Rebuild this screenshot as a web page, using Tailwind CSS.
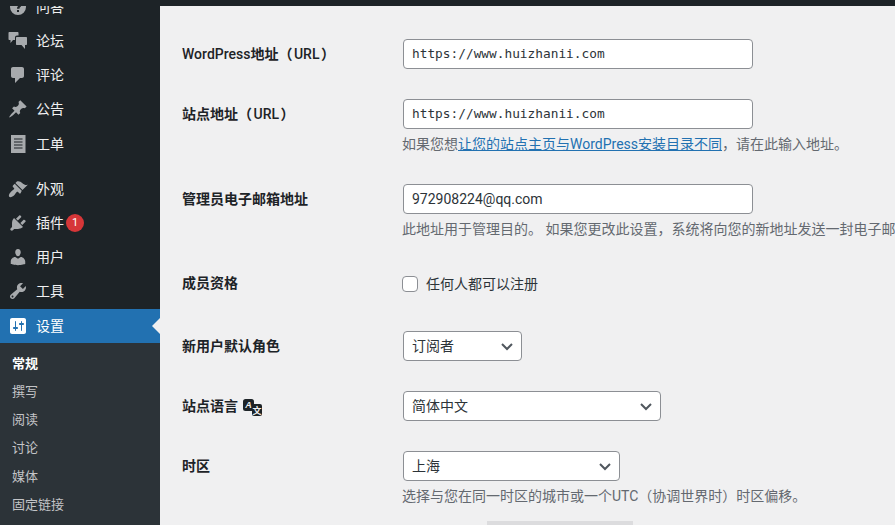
<!DOCTYPE html>
<html lang="zh-CN">
<head>
    <meta charset="UTF-8">
    <meta name="viewport" content="width=device-width, initial-scale=1.0">
    <title>常规选项</title>
    <script src="https://cdn.jsdelivr.net/npm/@tailwindcss/browser@4"></script>
</head>
<body class="h-[525px] overflow-hidden bg-[#f0f0f1] font-['Roboto','Noto_Sans_CJK_SC',sans-serif] text-sm">
<div class="h-[6px] bg-[#1d2327]"></div>
<div class="flex h-[519px] overflow-hidden">

    <!-- Sidebar -->
    <aside class="relative w-[160px] shrink-0 overflow-hidden bg-[#1d2327] text-[#f0f0f1]">
        <ul class="-mt-[16px]">
            <li class="flex h-[34px] items-center">
                <svg class="ml-[8px] h-5 w-5 fill-[#a7aaad]" viewBox="0 0 20 20"><path d="M10 2a8 8 0 1 0 0 16 8 8 0 0 0 0-16zm1 13H9v-2h2v2zm1.600-5.200c-.7.6-1.100 1-1.100 2H9c0-1.800.8-2.500 1.500-3.100.5-.4.9-.7.9-1.200 0-.6-.6-1-1.300-1-.8 0-1.400.5-1.500 1.300l-2-.3C6.900 5.800 8.200 4.800 10.100 4.800c2 0 3.300 1.100 3.300 2.800 0 1-.3 1.600-.8 2.200z"/></svg>
                <span class="ml-[8px]">问答</span>
            </li>
            <li class="flex h-[34px] items-center">
                <svg class="ml-[8px] h-5 w-5 fill-[#a7aaad]" viewBox="0 0 20 20"><path d="M1.500 1h8c.6 0 1 .4 1 1v2.500H9c-1.100 0-2 .9-2 2V9H5l-2.500 3V9h-1c-.6 0-1-.4-1-1V2c0-.6.4-1 1-1zM9 6h9c.6 0 1 .4 1 1v6c0 .6-.4 1-1 1h-1v4l-3.500-4H9c-.6 0-1-.4-1-1V7c0-.6.4-1 1-1z"/></svg>
                <span class="ml-[8px]">论坛</span>
            </li>
            <li class="flex h-[34px] items-center">
                <svg class="ml-[8px] h-5 w-5 fill-[#a7aaad]" viewBox="0 0 20 20"><path d="M5 2h9c1.100 0 2 .9 2 2v7c0 1.100-.9 2-2 2h-2l-5 5v-5H5c-1.100 0-2-.9-2-2V4c0-1.100.9-2 2-2z"/></svg>
                <span class="ml-[8px]">评论</span>
            </li>
            <li class="flex h-[34px] items-center">
                <svg class="ml-[8px] h-5 w-5 fill-[#a7aaad]" viewBox="0 0 20 20"><path d="M10.440 3.020l1.820-1.820 6.360 6.350-1.830 1.820c-1.050-.68-2.480-.57-3.410.36l-.75.75c-.92.93-1.040 2.350-.35 3.410l-1.830 1.820-2.410-2.410-2.800 2.790c-.42.42-3.380 2.710-3.800 2.290s1.860-3.390 2.280-3.810l2.790-2.790L4.100 9.360l1.830-1.820c1.050.69 2.480.57 3.400-.36l.75-.75c.93-.92 1.050-2.350.36-3.410z"/></svg>
                <span class="ml-[8px]">公告</span>
            </li>
            <li class="flex h-[34px] items-center pt-[1px]">
                <svg class="ml-[8px] h-5 w-5 fill-[#a7aaad]" viewBox="0 0 20 20"><path fill-rule="evenodd" d="M3 1h14.500v18H3zM6 4.500v1h8.500v-1zM6 7.500v1h8.500v-1zM6 10.500v1h8.500v-1zM6 13.500v1h8.500v-1z"/></svg>
                <span class="ml-[8px]">工单</span>
            </li>
            <li class="mt-[12px] flex h-[34px] items-center">
                <svg class="ml-[8px] h-5 w-5 fill-[#a7aaad]" viewBox="0 0 20 20"><path d="M14.480 11.060L7.410 3.990l1.500-1.500c.5-.56 2.300-.47 3.510.32 1.210.8 1.430 1.280 2.910 2.100 1.180.64 2.450 1.260 4.450.85zm-.71.71L6.700 4.700 4.930 6.470c-.39.39-.39 1.020 0 1.410l1.060 1.060c.39.39.39 1.030 0 1.420-.6.6-1.430 1.110-2.210 1.690-.35.26-.7.53-1.010.84-1.060 1.060-1.960 2.600-1.900 3.900.03.8.6 1.400 1.400 1.400 1.300.06 2.900-.9 3.900-1.900.31-.31.58-.66.84-1.010.58-.78 1.090-1.610 1.690-2.210.39-.39 1.030-.39 1.420 0l1.060 1.060c.39.39 1.020.39 1.410 0z"/></svg>
                <span class="ml-[8px]">外观</span>
            </li>
            <li class="flex h-[34px] items-center">
                <svg class="ml-[8px] h-5 w-5 fill-[#a7aaad]" viewBox="0 0 20 20"><path d="M13.110 4.360L9.870 7.600 8 5.730l3.240-3.240c.35-.34 1.050-.2 1.560.32.52.51.66 1.210.31 1.550zm-8 1.770l.91-1.120 9.010 9.010-1.190.84c-.71.71-2.630 1.160-3.820 1.160H6.140L4.900 17.260c-.59.59-1.540.59-2.120 0-.59-.58-.59-1.530 0-2.120l1.240-1.240v-3.880c0-1.130.4-3.190 1.090-3.890zm7.260 3.970l3.240-3.240c.34-.35 1.040-.21 1.550.31.52.51.66 1.210.31 1.550l-3.240 3.250z"/></svg>
                <span class="ml-[8px]">插件</span>
                <span class="ml-[2px] flex h-[18px] w-[18px] items-center justify-center rounded-full bg-[#d63638] text-[11px] text-white">1</span>
            </li>
            <li class="flex h-[34px] items-center">
                <svg class="ml-[8px] h-5 w-5 fill-[#a7aaad]" viewBox="0 0 20 20"><path d="M10 9.250c-2.270 0-2.730-3.440-2.730-3.440C7 4.020 7.820 2 9.970 2c2.160 0 2.980 2.020 2.710 3.810 0 0-.41 3.440-2.680 3.440zm0 2.570L12.720 10c2.390 0 4.520 2.330 4.520 4.530v2.490s-3.650 1.130-7.240 1.130c-3.650 0-7.240-1.130-7.240-1.130v-2.490c0-2.250 1.940-4.480 4.470-4.480z"/></svg>
                <span class="ml-[8px]">用户</span>
            </li>
            <li class="flex h-[34px] items-center">
                <svg class="ml-[8px] h-5 w-5 fill-[#a7aaad]" viewBox="0 0 20 20"><path d="M16.680 9.770c-1.340 1.340-3.300 1.670-4.950.99l-5.410 6.520c-.99.99-2.590.99-3.580 0s-.99-2.590 0-3.570l6.520-5.420c-.68-1.650-.35-3.610.99-4.950 1.280-1.280 3.120-1.620 4.720-1.060l-2.890 2.890 2.820 2.820 2.860-2.870c.53 1.580.18 3.390-1.080 4.650zM3.810 16.210c.4.39 1.040.39 1.430 0 .4-.4.4-1.040 0-1.430-.39-.4-1.030-.4-1.430 0-.39.39-.39 1.030 0 1.430z"/></svg>
                <span class="ml-[8px]">工具</span>
            </li>
            <li class="relative mt-[1px] flex h-[34px] items-center bg-[#2271b1] text-white">
                <svg class="ml-[8px] h-5 w-5 fill-white" viewBox="0 0 20 20"><path d="M18 16V4c0-1.100-.9-2-2-2H4c-1.100 0-2 .9-2 2v12c0 1.100.9 2 2 2h12c1.100 0 2-.9 2-2zM8 11h1c.55 0 1 .45 1 1s-.45 1-1 1H8v1.500c0 .28-.22.5-.5.5s-.5-.22-.5-.5V13H6c-.55 0-1-.45-1-1s.45-1 1-1h1V5.500c0-.28.22-.5.5-.5s.5.22.5.5V11zm5-2h-1c-.55 0-1-.45-1-1s.45-1 1-1h1V5.500c0-.28.22-.5.5-.5s.5.22.5.5V7h1c.55 0 1 .45 1 1s-.45 1-1 1h-1v5.500c0 .28-.22.5-.5.5s-.5-.22-.5-.5V9z"/></svg>
                <span class="ml-[8px]">设置</span>
                <span class="absolute top-[9px] right-0 border-y-[8px] border-r-[8px] border-y-transparent border-r-[#f0f0f1]"></span>
            </li>
        </ul>
        <!-- Settings submenu -->
        <ul class="h-[300px] bg-[#2c3338] pt-[7px] text-[13px] text-[#c3c4c7]">
            <li class="flex h-[28.2px] items-center pl-[12px] font-semibold text-white">常规</li>
            <li class="flex h-[28.2px] items-center pl-[12px]">撰写</li>
            <li class="flex h-[28.2px] items-center pl-[12px]">阅读</li>
            <li class="flex h-[28.2px] items-center pl-[12px]">讨论</li>
            <li class="flex h-[28.2px] items-center pl-[12px]">媒体</li>
            <li class="flex h-[28.2px] items-center pl-[12px]">固定链接</li>
        </ul>
    </aside>

    <!-- Settings form -->
    <main class="min-w-0 flex-1 overflow-hidden text-[#1d2327]">

        <div class="mt-[33px] flex pl-[22px]">
            <label class="flex h-[30px] w-[221px] shrink-0 items-center font-semibold"><span class="font-medium">WordPress</span>地址（<span class="px-[1.500px] font-medium">URL</span>）</label>
            <input type="text" value="https://www.huizhanii.com" class="h-[30px] w-[350px] rounded-[4px] border border-[#8c8f94] bg-white px-2 pb-[2px] font-['DejaVu_Sans_Mono',monospace] text-[12.8px] text-[#2c3338]">
        </div>

        <div class="mt-[30px] flex pl-[22px]">
            <label class="flex h-[30px] w-[221px] shrink-0 items-center font-semibold">站点地址（<span class="px-[1.500px] font-medium">URL</span>）</label>
            <div class="min-w-0">
                <input type="text" value="https://www.huizhanii.com" class="h-[30px] w-[350px] rounded-[4px] border border-[#8c8f94] bg-white px-2 pb-[2px] font-['DejaVu_Sans_Mono',monospace] text-[12.8px] text-[#2c3338]">
                <p class="-ml-px mt-[4px] h-[22px] leading-[22px] whitespace-nowrap text-[#646970]">如果您想<a href="#" class="text-[#2271b1] underline">让您的站点主页与WordPress安装目录不同</a>，请在此输入地址。</p>
            </div>
        </div>

        <div class="mt-[29px] flex pl-[22px]">
            <label class="flex h-[30px] w-[221px] shrink-0 items-center font-semibold">管理员电子邮箱地址</label>
            <div class="min-w-0">
                <input type="text" value="972908224@qq.com" class="h-[30px] w-[350px] rounded-[4px] border border-[#8c8f94] bg-white px-2 text-sm text-[#2c3338]">
                <p class="-ml-px mt-[4px] h-[22px] leading-[22px] whitespace-nowrap text-[#646970]">此地址用于管理目的。 如果您更改此设置，系统将向您的新地址发送一封电子邮件以确认它。</p>
            </div>
        </div>

        <div class="mt-[32px] flex items-center pl-[22px]">
            <span class="flex h-[24px] w-[221px] shrink-0 items-center pb-[2px] font-semibold">成员资格</span>
            <label class="flex items-center text-[#2c3338]">
                <input type="checkbox" class="-ml-px h-4 w-4 appearance-none rounded-[4px] border border-[#8c8f94] bg-white">
                <span class="ml-[8px]">任何人都可以注册</span>
            </label>
        </div>

        <div class="mt-[35px] flex pl-[22px]">
            <label class="flex h-[30px] w-[221px] shrink-0 items-center font-semibold">新用户默认角色</label>
            <div class="flex h-[30px] w-[119px] items-center justify-between rounded-[4px] border border-[#8c8f94] bg-white px-[8px] text-[#2c3338]">
                <span>订阅者</span>
                <svg class="h-[10px] w-[12px] fill-none stroke-[#50575e] stroke-2" viewBox="0 0 12 10"><path d="M1 3l5 5 5-5"/></svg>
            </div>
        </div>

        <div class="mt-[30px] flex pl-[22px]">
            <label class="flex h-[30px] w-[221px] shrink-0 items-center font-semibold">
                站点语言
                <svg class="mt-[4px] ml-[5px] h-5 w-5" viewBox="0 0 20 20">
                    <rect x="0" y="1" width="11" height="12" rx="2.500" fill="#1d2327"/>
                    <text x="5.500" y="10" text-anchor="middle" font-size="9" font-weight="700" font-style="italic" fill="#f0f0f1" font-family="Liberation Sans, sans-serif">A</text>
                    <rect x="9" y="6" width="10" height="12" rx="2" fill="#1d2327"/>
                    <text x="14" y="15.500" text-anchor="middle" font-size="9" font-weight="700" fill="#f0f0f1" font-family="Noto Sans CJK SC, sans-serif">文</text>
                </svg>
            </label>
            <div class="flex h-[30px] w-[258px] items-center justify-between rounded-[4px] border border-[#8c8f94] bg-white px-[8px] text-[#2c3338]">
                <span>简体中文</span>
                <svg class="h-[10px] w-[12px] fill-none stroke-[#50575e] stroke-2" viewBox="0 0 12 10"><path d="M1 3l5 5 5-5"/></svg>
            </div>
        </div>

        <div class="mt-[30px] flex pl-[22px]">
            <label class="flex h-[30px] w-[221px] shrink-0 items-center font-semibold">时区</label>
            <div class="min-w-0">
                <div class="flex h-[30px] w-[217px] items-center justify-between rounded-[4px] border border-[#8c8f94] bg-white px-[8px] text-[#2c3338]">
                    <span>上海</span>
                    <svg class="h-[10px] w-[12px] fill-none stroke-[#50575e] stroke-2" viewBox="0 0 12 10"><path d="M1 3l5 5 5-5"/></svg>
                </div>
                <p class="-ml-px mt-[4px] h-[22px] leading-[22px] whitespace-nowrap text-[#646970]">选择与您在同一时区的城市或一个UTC（协调世界时）时区偏移。</p>
            </div>
        </div>

        <!-- cut off by the window -->
        <div class="mt-[14px] ml-[327px] h-[20px] w-[146px] bg-[#dcdcde]"></div>
    </main>
</div>
</body>
</html>
